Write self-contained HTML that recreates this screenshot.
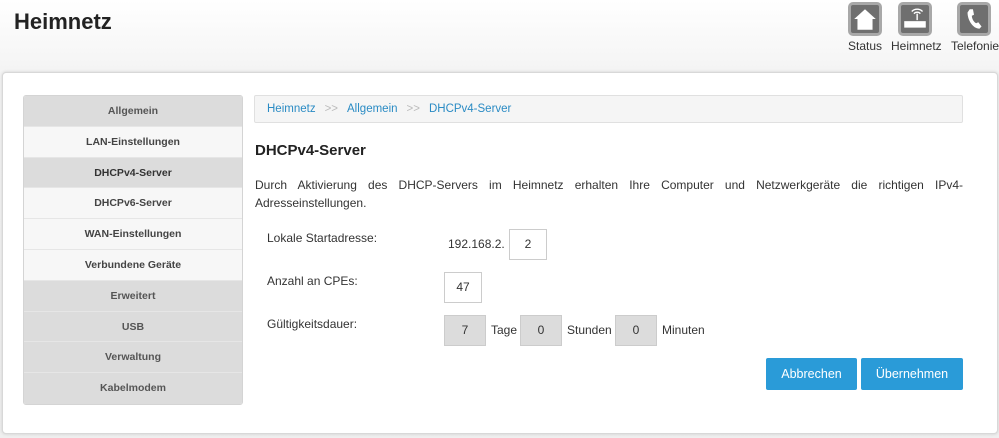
<!DOCTYPE html>
<html><head><meta charset="utf-8"><style>
*{box-sizing:border-box;margin:0;padding:0}
body{width:999px;height:438px;overflow:hidden;font-family:"Liberation Sans",Arial,sans-serif;background:linear-gradient(#fff 0,#f4f4f4 70px,#efefef 438px);position:relative;color:#333}
h1{position:absolute;left:14px;top:9px;font-size:22px;font-weight:bold;color:#222}
.ic{position:absolute;top:2px;width:34px;height:34px;background:#6f6f6f;border:3px solid #a8a8a8;border-radius:5px}
.il{position:absolute;top:39px;font-size:12px;color:#333}
.card{position:absolute;left:2px;top:72px;width:996px;height:362px;background:#fff;border:1px solid #d8d8d8;border-radius:4px;box-shadow:0 0 3px rgba(0,0,0,.15)}
.side{position:absolute;left:23px;top:95px;width:220px;border:1px solid #d4d4d4;border-radius:3px;overflow:hidden}
.side div{height:30.8px;line-height:30px;text-align:center;font-size:10.5px;font-weight:bold;color:#444;background:#f7f7f7;border-bottom:1px solid #e6e6e6}
.side .g{background:#dcdcdc;color:#555}
.bc{position:absolute;left:254px;top:95px;width:709px;height:28px;background:#f5f5f5;border:1px solid #e0e0e0;border-radius:2px;font-size:11.5px;line-height:26px;padding-left:12px;color:#2a8bc4}
.bc span{color:#bbb;margin:0 9px}
h2{position:absolute;left:255px;top:142px;font-size:15px;font-weight:bold;color:#222}
p{position:absolute;left:255px;top:176px;width:708px;font-size:12px;line-height:18px;text-align:justify;color:#333}
.l{position:absolute;left:267px;font-size:12px;color:#333}
.b{position:absolute;height:31px;border:1px solid #ccc;text-align:center;line-height:29px;font-size:12px;background:#fff}
.b.d{background:#dcdcdc}
.t{position:absolute;font-size:12px}
.btn{position:absolute;top:358px;height:32px;background:#2a9bd8;color:#fff;font-size:12.5px;line-height:32px;text-align:center;border-radius:2px}
</style></head><body>
<h1>Heimnetz</h1>
<div class="ic" style="left:848px"><svg width="28" height="28" viewBox="0 0 26 26"><path d="M3 13L13 4L23 13H20V23H6V13Z" fill="#fff"/></svg></div>
<div class="ic" style="left:898px"><svg width="28" height="28" viewBox="0 0 26 26"><rect x="3" y="15" width="20" height="6" fill="#fff"/><path d="M15 14V8M12 8a4 4 0 0 1 6 0M10 6a7 7 0 0 1 10 0" stroke="#fff" stroke-width="1.3" fill="none"/></svg></div>
<div class="ic" style="left:957px"><svg width="28" height="28" viewBox="0 0 26 26"><path d="M9 4l3 0 1 5-2 1c0 3 2 6 4 7l2-1 3 4-2 2c-6 0-11-8-11-15z" fill="#fff"/></svg></div>
<div class="il" style="left:848px">Status</div>
<div class="il" style="left:891px">Heimnetz</div>
<div class="il" style="left:951px">Telefonie</div>
<div class="card"></div>
<div class="side">
<div class="g">Allgemein</div><div>LAN-Einstellungen</div><div class="g" style="color:#333">DHCPv4-Server</div><div>DHCPv6-Server</div><div>WAN-Einstellungen</div><div>Verbundene Geräte</div><div class="g">Erweitert</div><div class="g">USB</div><div class="g">Verwaltung</div><div class="g" style="border:0">Kabelmodem</div>
</div>
<div class="bc">Heimnetz<span>&gt;&gt;</span>Allgemein<span>&gt;&gt;</span>DHCPv4-Server</div>
<h2>DHCPv4-Server</h2>
<p>Durch Aktivierung des DHCP-Servers im Heimnetz erhalten Ihre Computer und Netzwerkgeräte die richtigen IPv4-Adresseinstellungen.</p>
<div class="l" style="top:231px">Lokale Startadresse:</div>
<div class="t" style="left:448px;top:237px">192.168.2.</div>
<div class="b" style="left:509px;top:229px;width:38px">2</div>
<div class="l" style="top:274px">Anzahl an CPEs:</div>
<div class="b" style="left:444px;top:272px;width:38px">47</div>
<div class="l" style="top:317px">Gültigkeitsdauer:</div>
<div class="b d" style="left:444px;top:315px;width:42px">7</div>
<div class="t" style="left:491px;top:323px">Tage</div>
<div class="b d" style="left:520px;top:315px;width:42px">0</div>
<div class="t" style="left:567px;top:323px">Stunden</div>
<div class="b d" style="left:615px;top:315px;width:42px">0</div>
<div class="t" style="left:662px;top:323px">Minuten</div>
<div class="btn" style="left:766px;width:91px">Abbrechen</div>
<div class="btn" style="left:861px;width:102px">Übernehmen</div>
</body></html>
